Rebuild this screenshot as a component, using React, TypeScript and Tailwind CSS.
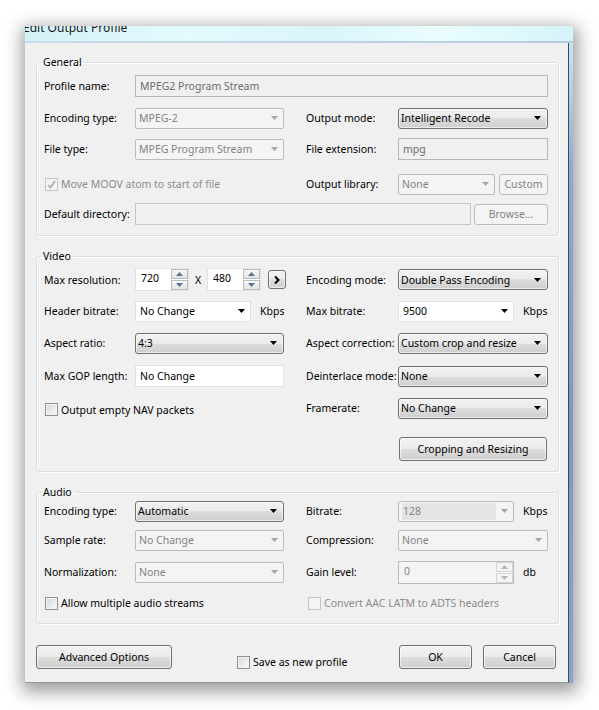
import React from "react";

type Variant = "vista" | "disabled" | "edit";

const comboStyles: Record<Variant, string> = {
  vista:
    "border-[#707070] rounded-[3px] bg-[linear-gradient(180deg,#f2f2f2,#ebebeb_50%,#dddddd_50%,#cfcfcf)] shadow-[inset_0_0_0_1px_rgba(255,255,255,0.6)] text-black pl-[2px] pr-[6px]",
  disabled: "border-[#b9bdc1] rounded-[2px] bg-[#f4f4f4] text-[#838383] pl-[3px] pr-[5px]",
  edit: "border-[#dfe2e7] bg-white text-black pl-[4px] pr-[5px]",
};

const Arrow = ({ disabled }: { disabled?: boolean }) => (
  <svg width="7" height="4" viewBox="0 0 7 4" className="shrink-0">
    <path d="M0 0H7L3.5 4Z" fill={disabled ? "#a6a6a6" : "#000"} />
  </svg>
);

function Combo({
  value,
  variant = "vista",
  className = "w-[149px]",
  selected,
}: {
  value: string;
  variant?: Variant;
  className?: string;
  selected?: boolean;
}) {
  return (
    <div className={`${className} h-[21px] shrink-0 border flex items-center whitespace-nowrap ${comboStyles[variant]}`}>
      {selected ? (
        <>
          <span className="w-[94px] h-[17px] bg-[#e4e4e4] pl-[1px] flex items-center">{value}</span>
          <span className="flex-1" />
        </>
      ) : (
        <span className="flex-1 min-w-0 overflow-hidden">{value}</span>
      )}
      <Arrow disabled={variant === "disabled"} />
    </div>
  );
}

function TextBox({
  value,
  disabled,
  className = "w-[149px]",
}: {
  value: string;
  disabled?: boolean;
  className?: string;
}) {
  return (
    <div
      className={`${className} h-[22px] shrink-0 border flex items-center pl-[4px] whitespace-nowrap ${
        disabled ? "border-[#b5b8bb] bg-[#f0f0f0] text-[#6d6d6d]" : "border-[#dfe2e7] bg-white text-black"
      }`}
    >
      {value}
    </div>
  );
}

const SpinArrow = ({ up, disabled }: { up?: boolean; disabled?: boolean }) => (
  <svg width="7" height="4" viewBox="0 0 7 4">
    <path d={up ? "M0 4H7L3.5 0Z" : "M0 0H7L3.5 4Z"} fill={disabled ? "#b4b4b4" : "#5b7394"} />
  </svg>
);

function Spinner({
  value,
  disabled,
  className = "w-[54px]",
}: {
  value: string;
  disabled?: boolean;
  className?: string;
}) {
  const btn = disabled
    ? "border-[#d2d4d6] bg-[#f4f4f4]"
    : "border-[#b8bcc2] bg-[linear-gradient(180deg,#f7f7f7,#e2e4e6)]";
  return (
    <div
      className={`${className} h-[23px] shrink-0 border flex ${
        disabled ? "border-[#b9bdc1] bg-[#f4f4f4] text-[#838383]" : "border-[#dfe2e7] bg-white text-black"
      }`}
    >
      <span className="flex-1 pl-[5px] pt-[2px]">{value}</span>
      <div className="w-[17px] flex flex-col gap-[1px]">
        <div className={`flex-1 border flex items-center justify-center ${btn}`}>
          <SpinArrow up disabled={disabled} />
        </div>
        <div className={`flex-1 border flex items-center justify-center ${btn}`}>
          <SpinArrow disabled={disabled} />
        </div>
      </div>
    </div>
  );
}

function Button({
  label,
  disabled,
  className,
}: {
  label?: React.ReactNode;
  disabled?: boolean;
  className: string;
}) {
  return (
    <button
      type="button"
      className={`${className} shrink-0 flex items-center justify-center border rounded-[3px] whitespace-nowrap ${
        disabled
          ? "border-[#b9bdc1] bg-[#f4f4f4] text-[#838383]"
          : "border-[#707070] bg-[linear-gradient(180deg,#f2f2f2,#ebebeb_50%,#dddddd_50%,#cfcfcf)] shadow-[inset_0_0_0_1px_rgba(255,255,255,0.6)] text-black"
      }`}
    >
      {label}
    </button>
  );
}

function Check({
  label,
  checked,
  disabled,
  className = "",
}: {
  label: string;
  checked?: boolean;
  disabled?: boolean;
  className?: string;
}) {
  return (
    <div
      className={`flex items-center gap-[3px] whitespace-nowrap ${className} ${
        disabled ? "text-[#8d8d8d]" : "text-black"
      }`}
    >
      <span
        className={`w-[13px] h-[13px] shrink-0 border flex items-center justify-center ${
          disabled
            ? "border-[#c4c4c4] bg-[#f4f4f4]"
            : "border-[#8f8f8f] bg-[linear-gradient(135deg,#d6d6d6,#fbfbfb)] shadow-[inset_0_0_0_1px_#f4f4f4]"
        }`}
      >
        {checked && (
          <svg width="9" height="9" viewBox="0 0 9 9">
            <path d="M1 5L3.5 7.5L8 1" stroke="#a8a8a8" strokeWidth="1.6" fill="none" />
          </svg>
        )}
      </span>
      <span>{label}</span>
    </div>
  );
}

function Row({
  left,
  right,
  className,
}: {
  left?: React.ReactNode;
  right?: React.ReactNode;
  className: string;
}) {
  return (
    <div className={`flex h-[22px] ${className}`}>
      <div className="w-[269px] shrink-0 pl-[7px] flex items-center">{left}</div>
      <div className="flex items-center">{right}</div>
    </div>
  );
}

const L = ({ children }: { children: string }) => (
  <span className="w-[91px] shrink-0 whitespace-nowrap">{children}</span>
);
const R = ({ children }: { children: string }) => (
  <span className="w-[92px] shrink-0 whitespace-nowrap">{children}</span>
);

function Group({ title, className, children }: { title: string; className: string; children: React.ReactNode }) {
  return (
    <fieldset
      className={`w-[523px] ml-[11px] border border-[#d5dfe5] rounded-[3px] shadow-[inset_1px_1px_0_#ffffff,1px_1px_0_#ffffff] ${className}`}
    >
      <legend className="ml-[4px] px-[2px] leading-[14px]">{title}</legend>
      {children}
    </fieldset>
  );
}

export default function App() {
  return (
    <div className="w-[599px] h-[710px] bg-white pt-[26px] pl-[25px] overflow-hidden font-['Noto_Sans','Open_Sans',sans-serif] text-[10.5px] leading-[14px] text-black">
      <div className="w-[548px] flex flex-col shadow-[1px_5px_16px_4px_rgba(0,0,0,0.38)]">
        {/* title bar */}
        <div className="h-[15px] overflow-hidden bg-[linear-gradient(90deg,#d3f1f7,#e4fafd_30%,#d9f5fa_55%,#eafdfe_75%,#d5f4f9)]">
          <div className="-mt-[4px] -ml-[2px] text-[12px] leading-[12px] text-[#1a1a1a] whitespace-nowrap">
            Edit Output Profile
          </div>
        </div>
        <div className="h-[2px] bg-[linear-gradient(90deg,#c4dce8,#b6cde0)]" />
        <div className="flex">
          {/* client area */}
          <div className="w-[544px] h-[640px] bg-[#f0f0f0] border-r border-b border-r-[#3d4a5c] border-b-[#8f96a0] flex flex-col">
            <Group title="General" className="mt-[12px] pb-[10px]">
              <Row
                className="mt-[6px]"
                left={
                  <>
                    <L>Profile name:</L>
                    <TextBox value="MPEG2 Program Stream" disabled className="w-[413px]" />
                  </>
                }
              />
              <Row
                className="mt-[10px]"
                left={
                  <>
                    <L>Encoding type:</L>
                    <Combo value="MPEG-2" variant="disabled" />
                  </>
                }
                right={
                  <>
                    <R>Output mode:</R>
                    <Combo value="Intelligent Recode" className="w-[150px]" />
                  </>
                }
              />
              <Row
                className="mt-[9px]"
                left={
                  <>
                    <L>File type:</L>
                    <Combo value="MPEG Program Stream" variant="disabled" />
                  </>
                }
                right={
                  <>
                    <R>File extension:</R>
                    <TextBox value="mpg" disabled className="w-[150px]" />
                  </>
                }
              />
              <Row
                className="mt-[13px]"
                left={<Check label="Move MOOV atom to start of file" checked disabled className="ml-[1px]" />}
                right={
                  <>
                    <R>Output library:</R>
                    <Combo value="None" variant="disabled" className="w-[97px]" />
                    <Button label="Custom" disabled className="w-[49px] h-[21px] ml-[4px]" />
                  </>
                }
              />
              <Row
                className="mt-[8px]"
                left={
                  <>
                    <L>Default directory:</L>
                    <TextBox value="" className="w-[336px] !border-[#c4c7ca] !bg-[#f0f0f0]" />
                    <Button label="Browse..." disabled className="w-[74px] h-[21px] ml-[3px]" />
                  </>
                }
              />
            </Group>

            <Group title="Video" className="mt-[13px] pb-[10px]">
              <Row
                className="mt-[5px] !h-[23px]"
                left={
                  <>
                    <L>Max resolution:</L>
                    <Spinner value="720" />
                    <span className="w-[18px] text-center">X</span>
                    <Spinner value="480" />
                    <Button
                      className="w-[18px] h-[19px] ml-[7px]"
                      label={
                        <svg width="8" height="10" viewBox="0 0 8 10">
                          <path d="M2 1.5L5.5 5L2 8.5" stroke="#000" strokeWidth="2" fill="none" />
                        </svg>
                      }
                    />
                  </>
                }
                right={
                  <>
                    <R>Encoding mode:</R>
                    <Combo value="Double Pass Encoding" className="w-[150px]" />
                  </>
                }
              />
              <Row
                className="mt-[9px]"
                left={
                  <>
                    <L>Header bitrate:</L>
                    <Combo value="No Change" variant="edit" className="w-[116px]" />
                    <span className="ml-[9px]">Kbps</span>
                  </>
                }
                right={
                  <>
                    <R>Max bitrate:</R>
                    <Combo value="9500" variant="edit" className="w-[116px]" />
                    <span className="ml-[9px]">Kbps</span>
                  </>
                }
              />
              <Row
                className="mt-[10px]"
                left={
                  <>
                    <L>Aspect ratio:</L>
                    <Combo value="4:3" />
                  </>
                }
                right={
                  <>
                    <R>Aspect correction:</R>
                    <Combo value="Custom crop and resize" className="w-[150px]" />
                  </>
                }
              />
              <Row
                className="mt-[11px]"
                left={
                  <>
                    <L>Max GOP length:</L>
                    <TextBox value="No Change" />
                  </>
                }
                right={
                  <>
                    <R>Deinterlace mode:</R>
                    <Combo value="None" className="w-[150px]" />
                  </>
                }
              />
              <Row
                className="mt-[10px]"
                left={<Check label="Output empty NAV packets" className="ml-[1px] mt-[3px]" />}
                right={
                  <>
                    <R>Framerate:</R>
                    <Combo value="No Change" className="w-[150px]" />
                  </>
                }
              />
              <Row
                className="mt-[18px] !h-[24px]"
                right={<Button label="Cropping and Resizing" className="w-[148px] h-[24px] ml-[93px]" />}
              />
            </Group>

            <Group title="Audio" className="mt-[13px] pb-[9px]">
              <Row
                className="mt-[1px]"
                left={
                  <>
                    <L>Encoding type:</L>
                    <Combo value="Automatic" />
                  </>
                }
                right={
                  <>
                    <R>Bitrate:</R>
                    <Combo value="128" variant="disabled" selected className="w-[116px]" />
                    <span className="ml-[9px]">Kbps</span>
                  </>
                }
              />
              <Row
                className="mt-[7px]"
                left={
                  <>
                    <L>Sample rate:</L>
                    <Combo value="No Change" variant="disabled" />
                  </>
                }
                right={
                  <>
                    <R>Compression:</R>
                    <Combo value="None" variant="disabled" className="w-[150px]" />
                  </>
                }
              />
              <Row
                className="mt-[10px]"
                left={
                  <>
                    <L>Normalization:</L>
                    <Combo value="None" variant="disabled" />
                  </>
                }
                right={
                  <>
                    <R>Gain level:</R>
                    <Spinner value="0" disabled className="w-[116px]" />
                    <span className="ml-[9px]">db</span>
                  </>
                }
              />
              <Row
                className="mt-[9px]"
                left={<Check label="Allow multiple audio streams" className="ml-[1px]" />}
                right={<Check label="Convert AAC LATM to ADTS headers" disabled className="ml-[2px]" />}
              />
            </Group>

            <div className="flex items-start mt-[21px] pl-[11px] pr-[12px]">
              <Button label="Advanced Options" className="w-[136px] h-[24px]" />
              <Check label="Save as new profile" className="ml-[65px] mt-[10px]" />
              <div className="flex-1" />
              <Button label="OK" className="w-[73px] h-[24px]" />
              <Button label="Cancel" className="w-[73px] h-[24px] ml-[11px]" />
            </div>
          </div>
          {/* right glass frame */}
          <div className="w-[4px] bg-[linear-gradient(180deg,#c7e6f2,#8ea9cf_20%,#7c97c4_60%,#8aa3cb)]" />
        </div>
      </div>
    </div>
  );
}
